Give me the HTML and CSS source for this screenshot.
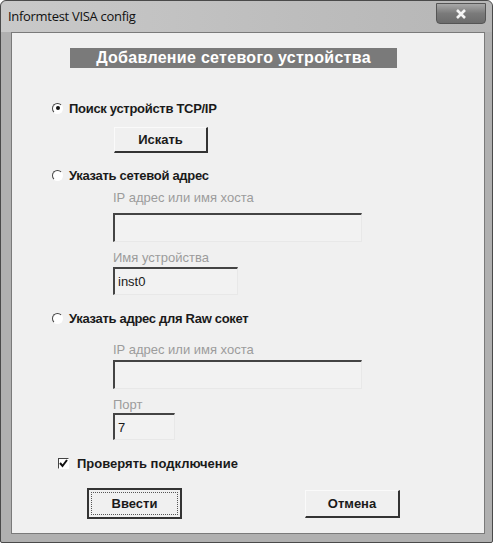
FILE: index.html
```html
<!DOCTYPE html>
<html lang="ru">
<head>
  <meta charset="UTF-8" />
  <title>Informtest VISA config</title>
  <link rel="stylesheet" href="styles.css">
</head>
<body>
  <div class="window">
    <div class="titlebar">
      <span class="title">Informtest VISA config</span>
      <div class="close">
        <svg width="12" height="10" viewBox="0 0 12 10">
          <path d="M2 1 L10 9 M10 1 L2 9" stroke="#f4f4f4" stroke-width="2.6" />
        </svg>
      </div>
    </div>
    <div class="client">
      <div class="header">Добавление сетевого устройства</div>

      <label class="option opt-first">
        <span class="radio checked"></span>
        Поиск устройств TCP/IP
      </label>
      <div class="btn search">Искать</div>

      <label class="option opt-second">
        <span class="radio"></span>
        Указать сетевой адрес
      </label>
      <div class="fields">
        <div class="caption cap-host">IP адрес или имя хоста</div>
        <div class="field wide host">&nbsp;</div>
        <div class="caption cap-name">Имя устройства</div>
        <div class="field mid name">inst0</div>
      </div>

      <label class="option opt-third">
        <span class="radio"></span>
        Указать адрес для Raw сокет
      </label>
      <div class="fields">
        <div class="caption cap-raw">IP адрес или имя хоста</div>
        <div class="field wide raw">&nbsp;</div>
        <div class="caption cap-port">Порт</div>
        <div class="field short port">7</div>
      </div>

      <label class="check">
        <span class="box">
          <svg width="9" height="9" viewBox="0 0 9 9">
            <path d="M1 4 L3.5 7 L8 1" stroke="#111" stroke-width="2" fill="none" />
          </svg>
        </span>
        Проверять подключение
      </label>

      <div class="actions">
        <div class="btn default"><span>Ввести</span></div>
        <div class="btn">Отмена</div>
      </div>
    </div>
  </div>
</body>
</html>
```

FILE: styles.css
```css
* {
  margin: 0;
  padding: 0;
  box-sizing: border-box;
}
body {
  background: #fff;
  font-family: 'Liberation Sans', Arial, sans-serif;
  color: #1a1a1a;
}
.window {
  width: 493px;
  height: 543px;
  border: 1px solid #4a4a4a;
  border-radius: 6px 6px 2px 2px;
  background: #b0b0b0;
  padding: 0 7px 8px 10px;
  display: flex;
  flex-direction: column;
}
.titlebar {
  height: 31px;
  display: flex;
  align-items: flex-start;
  justify-content: space-between;
  background: linear-gradient(to right, #c9c9c9, #bdbdbd 60%, #b6b6b6);
  margin: 0 -7px 0 -10px;
  padding: 0 6px 0 7px;
  border-radius: 6px 6px 0 0;
}
.title {
  font-family: 'Open Sans', sans-serif;
  font-size: 13px;
  color: #111;
  margin-top: 6px;
  letter-spacing: -0.3px;
}
.close {
  width: 50px;
  height: 21px;
  margin-top: 2px;
  border: 1px solid #555;
  border-radius: 0 0 4px 4px;
  background: linear-gradient(#a8a8a8, #7a7a7a 50%, #6c6c6c);
  display: flex;
  align-items: center;
  justify-content: center;
}
.client {
  flex: 1;
  background: #f0f0f0;
  border: 1px solid #7a7a7a;
}
.header {
  margin: 15px 0 0 58px;
  width: 327px;
  height: 20px;
  background: #7a7a7a;
  color: #fff;
  font-weight: bold;
  font-size: 16px;
  letter-spacing: 0.3px;
  line-height: 20px;
  text-align: center;
}
.option {
  display: flex;
  align-items: center;
  gap: 6px;
  margin-left: 40px;
  font-size: 13px;
  font-weight: bold;
  letter-spacing: -0.3px;
  height: 16px;
}
.opt-first {
  margin-top: 32px;
}
.opt-second {
  margin-top: 14px;
}
.opt-third {
  margin-top: 15px;
}
.radio {
  width: 11px;
  height: 11px;
  border-radius: 50%;
  border: 1px solid #fff;
  border-top-color: #444;
  border-left-color: #444;
  background: #fff;
  position: relative;
}
.radio.checked::after {
  content: "";
  position: absolute;
  left: 2.5px;
  top: 2.5px;
  width: 4px;
  height: 4px;
  border-radius: 50%;
  background: #111;
}
.btn {
  width: 95px;
  height: 28px;
  border: 1px solid #fafafa;
  border-right: 2px solid #333;
  border-bottom: 2px solid #333;
  background: #f0f0f0;
  font-size: 13px;
  font-weight: bold;
  display: flex;
  align-items: center;
  justify-content: center;
}
.search {
  margin: 11px 0 0 102px;
  width: 94px;
  height: 26px;
}
.fields {
  margin-left: 101px;
}
.caption {
  color: #9c9c9c;
  font-size: 13px;
  height: 14px;
  line-height: 14px;
}
.cap-host {
  margin-top: 8px;
}
.cap-name {
  margin-top: 9px;
}
.cap-raw {
  margin-top: 17px;
}
.cap-port {
  margin-top: 9px;
}
.field {
  border-top: 2px solid #444;
  border-left: 2px solid #444;
  border-right: 1px solid #e8e8e8;
  border-bottom: 1px solid #e8e8e8;
  background: #f2f2f2;
  font-size: 13px;
  padding: 5px 3px;
}
.host {
  margin-top: 8px;
  height: 29px;
}
.name {
  margin-top: 2px;
  height: 28px;
}
.raw {
  margin-top: 3px;
  height: 29px;
}
.port {
  margin-top: 1px;
  height: 27px;
}
.wide {
  width: 249px;
}
.mid {
  width: 125px;
}
.short {
  width: 62px;
}
.check {
  display: flex;
  align-items: center;
  gap: 8px;
  height: 16px;
  margin: 15px 0 0 46px;
  font-size: 13px;
  font-weight: bold;
}
.box {
  width: 11px;
  height: 11px;
  border: 1px solid #fff;
  border-top-color: #444;
  border-left-color: #444;
  background: #fff;
  display: flex;
  align-items: center;
  justify-content: center;
}
.actions {
  display: flex;
  justify-content: space-between;
  align-items: center;
  margin: 17px 0 0 75px;
  width: 313px;
}
.btn.default {
  border: 2px solid #333;
  height: 31px;
  padding: 2px;
}
.btn.default span {
  width: 100%;
  height: 100%;
  border: 1px dotted #555;
  display: flex;
  align-items: center;
  justify-content: center;
}
```
